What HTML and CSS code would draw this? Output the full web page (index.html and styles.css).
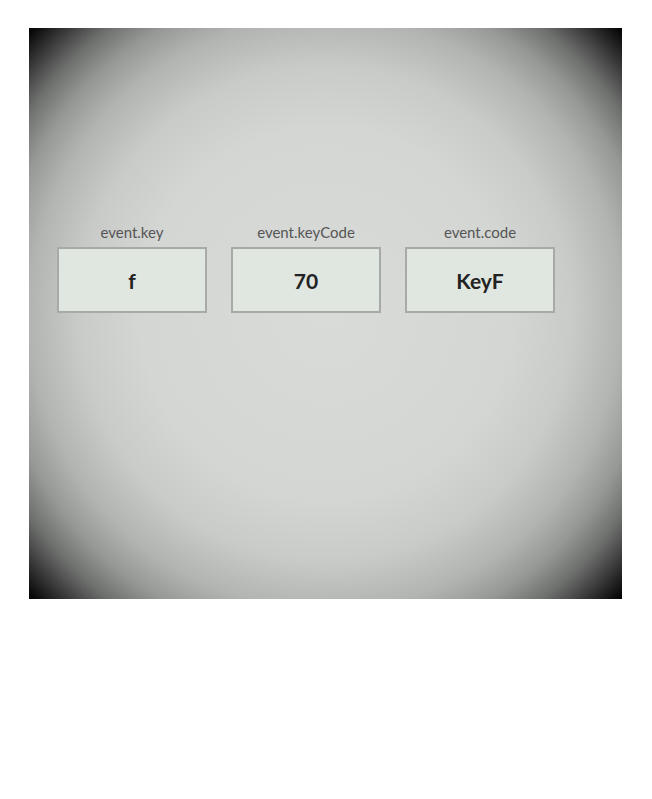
FILE: index.html
```html
<!DOCTYPE html>
<html lang="en">
<head>
    <meta charset="UTF-8">
    <meta name="viewport" content="width=device-width, initial-scale=1.0">
    <title>Key codes</title>
    <link rel="stylesheet" href="styles.css">
</head>
<body>
    <div class="screen">
        <div class="keys">
            <div class="key">
                <div class="key-label">event.key</div>
                <div class="key-value">f</div>
            </div>
            <div class="key">
                <div class="key-label">event.keyCode</div>
                <div class="key-value">70</div>
            </div>
            <div class="key">
                <div class="key-label">event.code</div>
                <div class="key-value">KeyF</div>
            </div>
        </div>
    </div>
</body>
</html>
```

FILE: styles.css
```css
body {
    margin: 0;
    padding: 28px 0 0 29px;
    background: #fff;
    font-family: Lato, "Open Sans", sans-serif;
}
.screen {
    width: 593px;
    height: 571px;
    box-sizing: border-box;
    padding: 195px 0 0 28px;
    background: radial-gradient(circle farthest-corner at center, #d9dbd9 0%, #d4d6d4 45%, #c9cbc9 60%, #b2b4b2 72%, #969896 80%, #6e706e 87%, #3c3c3c 93%, #000 100%);
}
.keys {
    display: flex;
    gap: 24px;
}
.key {
    width: 150px;
}
.key-label {
    text-align: center;
    font-size: 15px;
    line-height: 19px;
    color: #555;
    margin-bottom: 5px;
}
.key-value {
    height: 66px;
    box-sizing: border-box;
    border: 2px solid #a8aaa8;
    background: #e0e6e0;
    display: flex;
    align-items: center;
    justify-content: center;
    font-size: 21px;
    font-weight: bold;
    color: #222;
}
```
